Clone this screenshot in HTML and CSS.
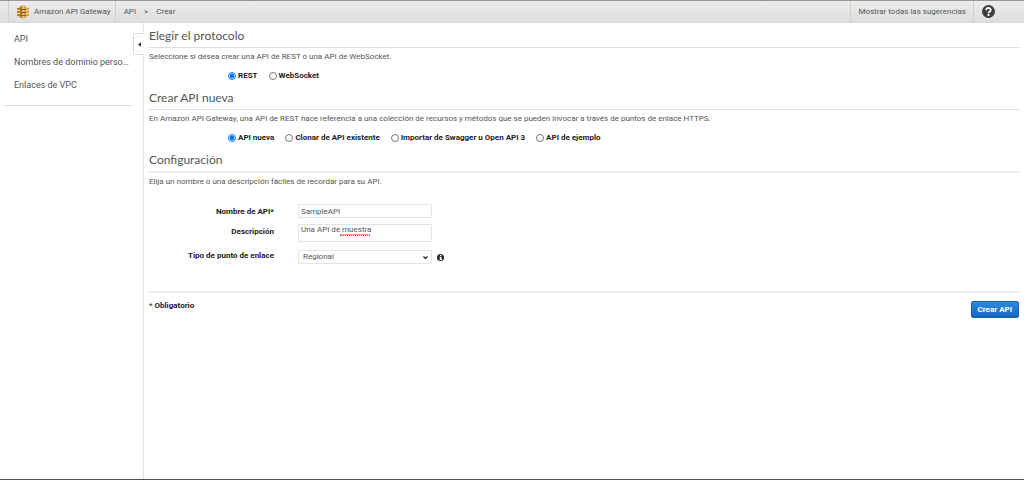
FILE: index.html
```html
<!DOCTYPE html>
<html lang="es">
<head>
<meta charset="utf-8">
<title>Amazon API Gateway</title>
<link rel="stylesheet" href="styles.css">
</head>
<body>
<header class="topbar">
  <a class="brand" href="#">
    <svg class="logo" viewBox="0 0 24 28" aria-hidden="true">
      <path fill="#b97c22" d="M6 3l5-2v26l-5-2zM0 6l6-1v5H0zM0 12h6v4H0zM0 18h6v5l-6-1z"/>
      <path fill="#dba23f" d="M13 1l5 2v22l-5 2zM18 5l6 1v4h-6zM18 12h6v4h-6zM18 18h6v4l-6 1z"/>
      <path fill="#8f5f1a" d="M6 8h12v2H6zM6 14h12v2H6zM6 20h12v2H6z"/>
    </svg>
    <span>Amazon API Gateway</span>
  </a>
  <nav class="crumbs"><a href="#">API</a><span>&gt;</span><a href="#">Crear</a></nav>
  <a class="hints" href="#">Mostrar todas las sugerencias</a>
  <button class="help" type="button" aria-label="Ayuda">
    <svg viewBox="0 0 26 26" aria-hidden="true">
      <circle cx="13" cy="13" r="13" fill="#3d3d3d"/>
      <path d="M8.500 10.500c0-6 9-6 9-.5 0 3-4.500 3-4.500 6.500" fill="none" stroke="#fff" stroke-width="3.500"/>
      <rect x="11" y="18" width="4" height="4" fill="#fff"/>
    </svg>
  </button>
</header>
<div class="layout">
  <aside class="sidebar">
    <nav class="menu">
      <a href="#">API</a>
      <a href="#">Nombres de dominio perso…</a>
      <a href="#">Enlaces de VPC</a>
    </nav>
    <button class="collapse" type="button" aria-label="Contraer">
      <svg viewBox="0 0 4 6" aria-hidden="true"><path d="M4 0v6L0 3z" fill="#333"/></svg>
    </button>
  </aside>
  <main class="content">
    <form>
      <section class="block">
        <h2>Elegir el protocolo</h2>
        <p>Seleccione si desea crear una API de REST o una API de WebSocket.</p>
        <div class="choices">
          <label><input type="radio" name="protocol" checked>REST</label>
          <label><input type="radio" name="protocol">WebSocket</label>
        </div>
      </section>
      <section class="block">
        <h2>Crear API nueva</h2>
        <p>En Amazon API Gateway, una API de REST hace referencia a una colección de recursos y métodos que se pueden invocar a través de puntos de enlace HTTPS.</p>
        <div class="choices">
          <label><input type="radio" name="source" checked>API nueva</label>
          <label><input type="radio" name="source">Clonar de API existente</label>
          <label><input type="radio" name="source">Importar de Swagger u Open API 3</label>
          <label><input type="radio" name="source">API de ejemplo</label>
        </div>
      </section>
      <section class="block config">
        <h2>Configuración</h2>
        <p>Elija un nombre o una descripción fáciles de recordar para su API.</p>
        <div class="fields">
          <label for="name">Nombre de API*</label>
          <div class="control"><input class="box" id="name" type="text" value="SampleAPI"></div>
          <label for="desc">Descripción</label>
          <div class="control"><textarea class="box" id="desc" spellcheck="false">Una API de muestra</textarea><span class="squiggle"></span></div>
          <label for="type">Tipo de punto de enlace</label>
          <div class="control">
            <select class="box" id="type"><option>Regional</option></select>
            <svg class="chevron" viewBox="0 0 10 6" aria-hidden="true"><path d="M1 1l4 4 4-4" fill="none" stroke="#222" stroke-width="2.500"/></svg>
            <svg class="info" viewBox="0 0 14 14" aria-hidden="true">
              <circle cx="7" cy="7" r="7" fill="#222"/>
              <path d="M6 2h3v2H6zM5 5.500h4V10h1v2H5v-2h1V7.500H5z" fill="#fff"/>
            </svg>
          </div>
        </div>
      </section>
      <footer class="actions">
        <strong><span class="star">*</span> Obligatorio</strong>
        <button class="primary" type="submit">Crear API</button>
      </footer>
    </form>
  </main>
</div>
</body>
</html>
```
FILE: styles.css
```css
* { box-sizing: border-box; }
body {
  margin: 0;
  min-height: 100vh;
  display: flex;
  flex-direction: column;
  border-bottom: 1px solid #50545c;
  background: #fff;
  color: #555;
  font: 8px/10px Roboto, Arial, sans-serif;
}
a { color: inherit; text-decoration: none; }
button { font: inherit; cursor: pointer; }

.topbar {
  display: flex;
  height: 23px;
  border-top: 1px solid #9696a2;
  border-bottom: 1px solid #d8d8d8;
  background: linear-gradient(#ececec, #dedede);
}
.brand {
  display: flex;
  align-items: center;
  gap: 5px;
  margin-left: 8px;
  padding: 0 4px 0 8px;
  border: solid #cfcfcf;
  border-width: 0 1px;
}
.logo { width: 12px; height: 14px; }
.crumbs { display: flex; align-items: center; gap: 8px; padding-left: 8px; }
.hints {
  display: flex;
  align-items: center;
  margin-left: auto;
  padding: 0 7px;
  border: solid #cfcfcf;
  border-width: 0 1px;
}
.help {
  display: flex;
  align-items: center;
  margin-right: 29px;
  padding: 0 0 0 8px;
  border: 0;
  background: none;
}
.help svg { width: 13px; height: 13px; }

.layout { display: flex; flex: 1; }
.sidebar {
  position: relative;
  flex: 0 0 144px;
  min-width: 0;
  padding-left: 4px;
  border-right: 1px solid #e2e2e2;
}
.menu {
  display: flex;
  flex-direction: column;
  gap: 11px;
  margin-right: 11px;
  padding: 10px 0 14px 10px;
  border-bottom: 1px solid #ddd;
  font-size: 9px;
  line-height: 12px;
}
.menu a { white-space: nowrap; }
.collapse {
  position: absolute;
  top: 10px;
  right: -1px;
  display: flex;
  align-items: center;
  width: 11px;
  height: 22px;
  padding: 0 0 0 4px;
  border: 1px solid #ddd;
  border-right: 0;
  border-radius: 2px 0 0 2px;
  background: #fff;
}
.collapse svg { width: 3px; height: 5px; }

.content { flex: 1; min-width: 0; padding: 5px 5px 0; }
.block { height: 62px; }
h2 {
  margin: 0 0 4px;
  padding-bottom: 3px;
  border-bottom: 1px solid #ddd;
  font: 12px/16px Lato, sans-serif;
  color: #555;
}
p { margin: 0; }
.choices {
  display: flex;
  gap: 11px;
  margin: 9px 0 0 79px;
  color: #222;
  font-weight: bold;
}
.choices label { display: flex; align-items: center; gap: 2px; }
.choices input { width: 8px; height: 8px; margin: 0; }

.config { height: auto; padding-bottom: 27px; border-bottom: 2px solid #eee; }
.config h2 { border-bottom: 2px solid #eee; }
.fields {
  display: grid;
  grid-template-columns: 125px 1fr;
  column-gap: 24px;
  row-gap: 6px;
  margin-top: 17px;
}
.fields > label {
  padding-top: 3px;
  color: #222;
  font-weight: bold;
  text-align: right;
}
.control { position: relative; display: flex; align-items: center; gap: 5px; }
.box {
  display: block;
  width: 134px;
  height: 14px;
  margin: 0;
  padding: 0 2px;
  border: 1px solid #e4e4e4;
  border-radius: 1px;
  background: #fff;
  color: #555;
  font: inherit;
}
textarea.box { height: 18px; resize: none; overflow: hidden; }
select.box { padding: 0 4px; appearance: none; }
.control:last-child { padding-top: 2px; }
.squiggle {
  position: absolute;
  left: 42px;
  top: 10px;
  width: 30px;
  height: 2px;
  border-bottom: 1px dotted #e33;
  border-top: 1px solid #e99;
}
.chevron { position: absolute; left: 125px; width: 5px; height: 3px; }
.info { width: 7px; height: 7px; }

.actions {
  display: flex;
  justify-content: space-between;
  align-items: flex-start;
  padding-top: 8px;
  color: #222;
}
.star { font-weight: normal; }
.primary {
  height: 17px;
  padding: 0 6px;
  border: 1px solid #1a64ad;
  border-radius: 2px;
  background: linear-gradient(#2a8ae0, #1668bd);
  color: #fff;
  font-weight: bold;
}
```
